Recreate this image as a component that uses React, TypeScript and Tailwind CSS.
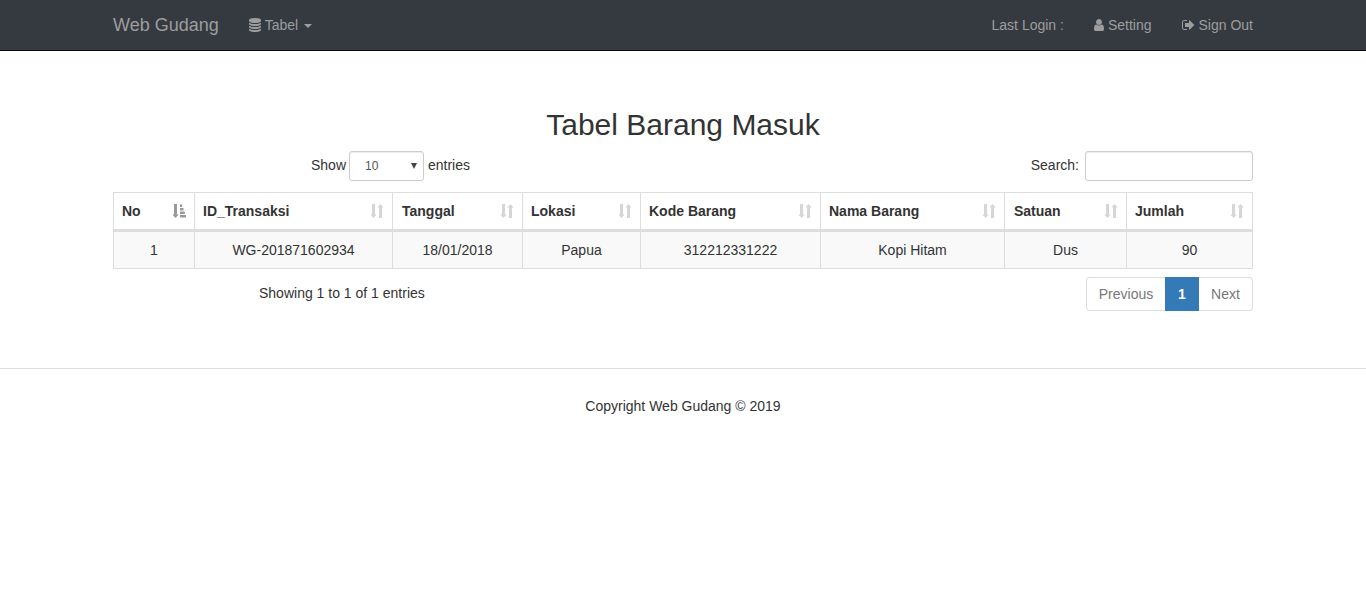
import type { ReactNode } from "react";

const columns = [
  ["No", "1"],
  ["ID_Transaksi", "WG-201871602934"],
  ["Tanggal", "18/01/2018"],
  ["Lokasi", "Papua"],
  ["Kode Barang", "312212331222"],
  ["Nama Barang", "Kopi Hitam"],
  ["Satuan", "Dus"],
  ["Jumlah", "90"],
];

function Glyph({ width, d }: { width: number; d: string }) {
  return (
    <svg className="h-[14px] shrink-0 fill-current" width={width / 128} height="14" viewBox={`0 0 ${width} 1792`}>
      <path d={d} />
    </svg>
  );
}

const databasePath =
  "M768 768q237 0 443-43t325-127v170q0 69-103 128t-280 93.500-385 34.500-385-34.500-280-93.500-103-128v-170q119 84 325 127t443 43zm0 768q237 0 443-43t325-127v170q0 69-103 128t-280 93.500-385 34.500-385-34.500-280-93.500-103-128v-170q119 84 325 127t443 43zm0-384q237 0 443-43t325-127v170q0 69-103 128t-280 93.500-385 34.500-385-34.500-280-93.500-103-128v-170q119 84 325 127t443 43zm0-1152q208 0 385 34.500t280 93.500 103 128v128q0 69-103 128t-280 93.500-385 34.500-385-34.500-280-93.500-103-128v-128q0-69 103-128t280-93.500 385-34.500z";
const userPath =
  "M1280 1399q0 109-62.500 187t-150.500 78h-854q-88 0-150.500-78t-62.500-187q0-85 8.500-160.500t31.500-152 58.500-131 94-89 134.500-34.500q131 128 313 128t313-128q76 0 134.500 34.500t94 89 58.500 131 31.500 152 8.500 160.500zm-256-887q0 159-112.500 271.500t-271.500 112.500-271.500-112.500-112.500-271.500 112.500-271.500 271.500-112.500 271.500 112.500 112.500 271.500z";
const signOutPath =
  "M640 1440q0 4 1 20t.5 26.500-3 23.500-10 19.500-20.500 6.500h-320q-119 0-203.500-84.500t-84.500-203.500v-704q0-119 84.500-203.500t203.500-84.500h320q13 0 22.500 9.500t9.500 22.500q0 4 1 20t.5 26.500-3 23.500-10 19.500-20.500 6.500h-320q-66 0-113 47t-47 113v704q0 66 47 113t113 47h312l11.500 1 11.500 3 8 5.500 7 9 2 13.500zm928-544q0 26-19 45l-544 544q-19 19-45 19t-45-19-19-45v-288h-448q-26 0-45-19t-19-45v-384q0-26 19-45t45-19h448v-288q0-26 19-45t45-19 45 19l544 544q19 19 19 45z";

function SortIcon() {
  return (
    <svg className="h-[14px] w-[14px] fill-[#d6d6d6]" viewBox="0 0 14 14">
      <path d="M2 0h3v10.500h1.700L3.500 14 .3 10.500H2zM9 14h3V3.500h1.700L10.500 0 7.300 3.500H9z" />
    </svg>
  );
}

function SortAscIcon() {
  return (
    <svg className="h-[14px] w-[14px] fill-[#999]" viewBox="0 0 14 14">
      <path d="M2 0h3v10.500h1.700L3.500 14 .3 10.500H2zM8 .5h2.200V3H8zM8 4h3.500v2.500H8zM8 7.500h4.800V10H8zM8 11h6v2.500H8z" />
    </svg>
  );
}

function NavItem({ children }: { children: ReactNode }) {
  return <a className="flex items-center gap-1 whitespace-nowrap px-[15px]">{children}</a>;
}

export default function App() {
  return (
    <div className="min-h-[608px] bg-white font-['Liberation_Sans',Arial,sans-serif] text-[14px] leading-[20px] text-[#333]">
      <nav className="h-[51px] border-b border-[#080808] bg-[#343a40]">
        <div className="mx-auto flex h-[50px] w-[1140px] items-center text-[#9d9d9d]">
          <a className="mr-[15px] text-[18px]">Web Gudang</a>
          <NavItem>
            <Glyph width={1536} d={databasePath} />
            <span>Tabel</span>
            <span className="mt-[2px] ml-[2px] border-x-4 border-t-4 border-x-transparent" />
          </NavItem>
          <div className="ml-auto -mr-[15px] flex">
            <NavItem>Last Login :</NavItem>
            <NavItem>
              <Glyph width={1280} d={userPath} />
              <span>Setting</span>
            </NavItem>
            <NavItem>
              <Glyph width={1664} d={signOutPath} />
              <span>Sign Out</span>
            </NavItem>
          </div>
        </div>
      </nav>

      <main className="mx-auto w-[1140px] pt-[57px]">
        <h1 className="text-center text-[30px] leading-[33px]">Tabel Barang Masuk</h1>
        <div className="mt-[10px] flex h-[30px] items-center">
          <span className="ml-[198px] w-[35px] pb-[2px] whitespace-nowrap">Show</span>
          <div className="ml-[3px] flex h-[30px] w-[75px] items-center justify-between rounded-[3px] border border-[#ccc] pr-[6px] pl-[15px] text-[12px] text-[#555] shadow-[inset_0_1px_1px_rgba(0,0,0,0.075)]">
            <span>10</span>
            <svg className="h-[6px] w-[6px] fill-[#444]" viewBox="0 0 6 6">
              <path d="M0 0h6L3 6z" />
            </svg>
          </div>
          <span className="ml-[4px] pb-[2px]">entries</span>
          <label className="ml-auto flex items-center gap-[6px]">
            <span className="pb-[2px]">Search:</span>
            <input className="h-[30px] w-[168px] rounded-[3px] border border-[#ccc] px-2 shadow-[inset_0_1px_1px_rgba(0,0,0,0.075)]" />
          </label>
        </div>

        <div className="mt-[11px] grid h-[77px] grid-cols-[81px_198px_130px_118px_180px_184px_122px_126px] border-y border-r border-[#ddd]">
          {columns.map(([title, value], i) => (
            <div key={title} className="border-l border-[#ddd]">
              <div className="flex h-[39px] items-center justify-between border-b-3 border-[#ddd] px-2 font-bold">
                <span className={i === 2 || i === 6 ? "pl-px" : ""}>{title}</span>
                {i === 0 ? <SortAscIcon /> : <SortIcon />}
              </div>
              <div className="flex h-[36px] items-center justify-center bg-[#f9f9f9]">{value}</div>
            </div>
          ))}
        </div>

        <div className="mt-[8px] flex h-[34px]">
          <span className="ml-[146px] pt-[6px]">Showing 1 to 1 of 1 entries</span>
          <div className="ml-auto flex text-[#777]">
            <span className="flex w-[79px] items-center justify-center rounded-l border border-r-0 border-[#ddd]">Previous</span>
            <span className="flex w-[34px] items-center justify-center bg-[#337ab7] font-bold text-white">1</span>
            <span className="flex w-[54px] items-center justify-center rounded-r border border-l-0 border-[#ddd]">Next</span>
          </div>
        </div>
      </main>

      <footer className="mt-[57px] border-t border-[#ddd] pt-[27px] text-center">Copyright Web Gudang © 2019</footer>
    </div>
  );
}
